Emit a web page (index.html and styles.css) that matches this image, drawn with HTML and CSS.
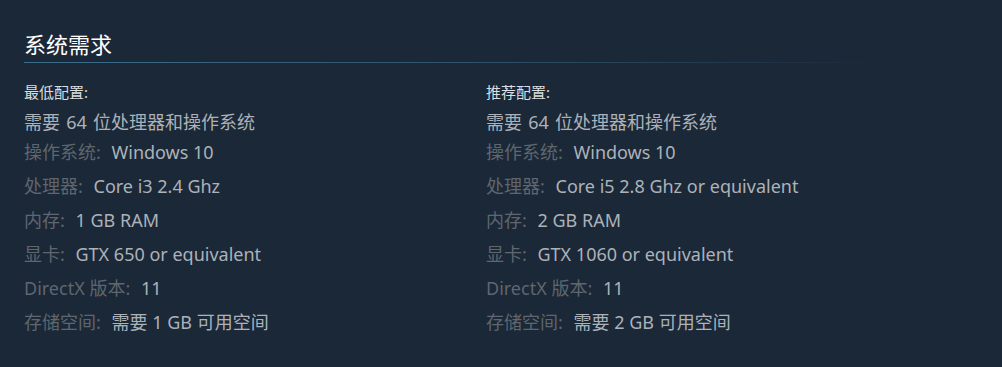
FILE: index.html
```html
<!DOCTYPE html>
<html lang="zh-CN">
<head>
<meta charset="utf-8">
<link rel="stylesheet" href="styles.css">
</head>
<body>
<section class="sysreq">
  <h2 class="sysreq-title">系统需求</h2>
  <div class="sysreq-cols">
    <div class="col">
      <div class="col-head">最低配置:</div>
      <ul class="reqs">
        <li class="note">需要 64 位处理器和操作系统</li>
        <li><span class="lbl">操作系统:</span> Windows 10</li>
        <li><span class="lbl">处理器:</span> Core i3 2.4 Ghz</li>
        <li><span class="lbl">内存:</span> 1 GB RAM</li>
        <li><span class="lbl">显卡:</span> GTX 650 or equivalent</li>
        <li><span class="lbl">DirectX 版本:</span> 11</li>
        <li><span class="lbl">存储空间:</span> 需要 1 GB 可用空间</li>
      </ul>
    </div>
    <div class="col">
      <div class="col-head">推荐配置:</div>
      <ul class="reqs">
        <li class="note">需要 64 位处理器和操作系统</li>
        <li><span class="lbl">操作系统:</span> Windows 10</li>
        <li><span class="lbl">处理器:</span> Core i5 2.8 Ghz or equivalent</li>
        <li><span class="lbl">内存:</span> 2 GB RAM</li>
        <li><span class="lbl">显卡:</span> GTX 1060 or equivalent</li>
        <li><span class="lbl">DirectX 版本:</span> 11</li>
        <li><span class="lbl">存储空间:</span> 需要 2 GB 可用空间</li>
      </ul>
    </div>
  </div>
</section>
</body>
</html>
```

FILE: styles.css
```css
html, body {
  margin: 0;
  padding: 0;
  background: #1b2838;
  height: 100%;
}
body {
  font-family: "Noto Sans", "Noto Sans CJK SC", sans-serif;
  color: #acb2b8;
}
.sysreq {
  padding: 32px 0 0 24px;
}
.sysreq-title {
  margin: 0;
  font-weight: normal;
  font-size: 22px;
  line-height: 25px;
  color: #ffffff;
  width: 860px;
  background-image: linear-gradient(to right, #3b6e8c 0%, #30546e 50%, rgba(27, 40, 56, 0) 100%);
  background-repeat: no-repeat;
  background-size: 100% 1px;
  background-position: left bottom;
  padding-bottom: 6px;
}
.sysreq-cols {
  display: grid;
  grid-template-columns: 462px 1fr;
  margin-top: 19px;
}
.col-head {
  font-size: 15px;
  line-height: 20px;
  color: #dcdedf;
}
.reqs {
  list-style: none;
  margin: 8px 0 0;
  padding: 0;
}
.reqs li {
  font-size: 18px;
  line-height: 24px;
  margin-top: 10px;
  white-space: nowrap;
}
.reqs li.note {
  margin-top: 0;
  word-spacing: 1.5px;
}
.reqs li.note + li {
  margin-top: 6px;
}
.lbl {
  color: #5f666d;
  margin-right: 6px;
}
```
